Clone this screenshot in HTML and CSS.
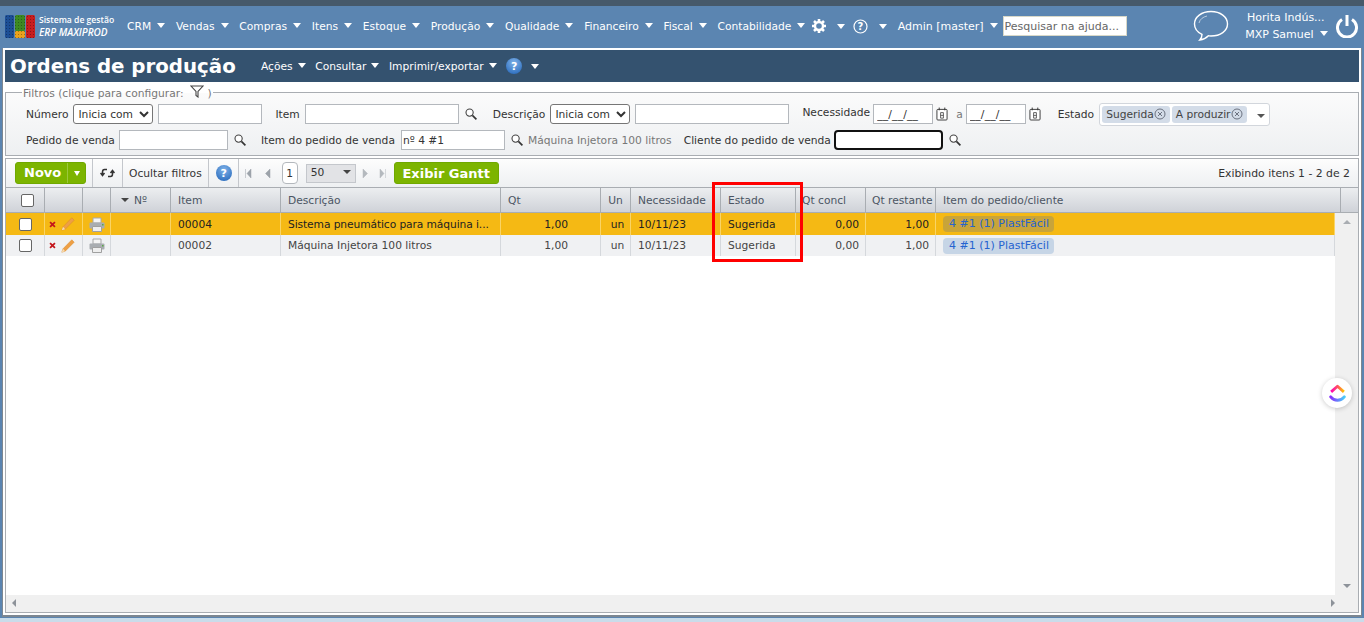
FILE: index.html
```html
<!DOCTYPE html>
<html lang="pt-BR">
<head>
    <meta charset="UTF-8">
    <title>Ordens de produção</title>
    <link rel="stylesheet" href="styles.css">
</head>
<body>
    <svg class="defs" width="0" height="0">
        <symbol id="lupa" viewBox="0 0 12 12">
            <circle cx="4.600" cy="4.600" r="3.600" fill="#fff" stroke="#444" stroke-width="1.100"/>
            <path d="M7.400 7.400l4 4" stroke="#333" stroke-width="1.700"/>
        </symbol>
        <symbol id="calendario" viewBox="0 0 13 15">
            <rect x="1" y="2.500" width="11" height="11.500" rx="1" fill="#fff" stroke="#333"/>
            <path d="M3.500 .5v3M9.500 .5v3" stroke="#333"/>
            <path d="M5 6h3v6H5zM5 9h3" fill="none" stroke="#444" stroke-width=".9"/>
        </symbol>
        <symbol id="impressora" viewBox="0 0 16 15">
            <path d="M4 6V1h8v5z" fill="#f4f4f4" stroke="#a8a8a8"/>
            <rect x=".5" y="5.500" width="15" height="6" rx="1" fill="#a9adb1"/>
            <path d="M3.500 9.500h9v5h-9z" fill="#eee" stroke="#a0a0a0"/>
            <path d="M13 7h1.500v1.500H13z" fill="#5aa845"/>
        </symbol>
        <symbol id="lapis" viewBox="0 0 14 14">
            <path d="M.8 13.200l1.200-3.400L10.800.8l2.400 2.400-9 9z" fill="#ee9f45" stroke="#d98a2b" stroke-width=".5"/>
            <path d="M.8 13.200L2 9.800l2.200 2.400z" fill="#f6dcb4"/>
        </symbol>
        <symbol id="fechar" viewBox="0 0 8 8">
            <path d="M1.200 1.200l5.600 5.600M6.800 1.200L1.200 6.800" stroke="#c4161c" stroke-width="2"/>
        </symbol>
        <symbol id="remover" viewBox="0 0 12 12">
            <circle cx="6" cy="6" r="5" fill="none" stroke="#6b7280"/>
            <path d="M4 4l4 4M8 4l-4 4" stroke="#6b7280"/>
        </symbol>
        <pattern id="pontos" width="3" height="3" patternUnits="userSpaceOnUse">
            <rect x="1" y="1" width="1" height="1" fill="#000" opacity=".3"/>
        </pattern>
    </svg>

    <div class="faixa"></div>

    <header class="topo">
        <svg class="logo" width="30" height="23" viewBox="0 0 30 23">
            <rect x="0" y="0" width="9" height="23" rx="1.500" fill="#1d4f96"/>
            <rect x="10" y="0" width="10" height="16" rx="1.500" fill="#3d8a22"/>
            <rect x="10" y="16" width="10" height="7" rx="1" fill="#eba21d"/>
            <rect x="21" y="0" width="9" height="23" rx="1.500" fill="#c81e1e"/>
            <rect x="0" y="0" width="30" height="23" fill="url(#pontos)"/>
        </svg>
        <div class="marca">
            <span>Sistema de gestão</span>
            <strong>ERP MAXIPROD</strong>
        </div>
        <nav class="menu">
            <a>CRM<i class="seta"></i></a>
            <a>Vendas<i class="seta"></i></a>
            <a>Compras<i class="seta"></i></a>
            <a>Itens<i class="seta"></i></a>
            <a>Estoque<i class="seta"></i></a>
            <a>Produção<i class="seta"></i></a>
            <a>Qualidade<i class="seta"></i></a>
            <a>Financeiro<i class="seta"></i></a>
            <a>Fiscal<i class="seta"></i></a>
            <a>Contabilidade<i class="seta"></i></a>
        </nav>
        <svg class="engrenagem" width="16" height="16" viewBox="0 0 16 16">
            <path d="M8 1v3M8 12v3M1 8h3M12 8h3M3 3l2.200 2.200M10.800 10.800L13 13M13 3l-2.200 2.200M5.200 10.800L3 13" stroke="#fff" stroke-width="2.600"/>
            <circle cx="8" cy="8" r="4" fill="none" stroke="#fff" stroke-width="2.400"/>
        </svg>
        <i class="seta seta-eng"></i>
        <svg class="ajuda-topo" width="15" height="15" viewBox="0 0 15 15">
            <circle cx="7.500" cy="7.500" r="6.500" fill="none" stroke="#fff" stroke-width="1.200"/>
            <text x="7.500" y="11" text-anchor="middle" class="ajuda-txt">?</text>
        </svg>
        <i class="seta seta-aj"></i>
        <a class="admin">Admin [master]<i class="seta"></i></a>
        <input class="pesquisa" placeholder="Pesquisar na ajuda...">
        <svg class="chat" width="36" height="32" viewBox="0 0 36 32">
            <path d="M18 1.500C8.600 1.500 1.500 7 1.500 14c0 4.700 3 8.300 7.500 10.400 0 2-.8 4-2.200 5.600 3.500-.4 6.500-2 8.600-4.200 1 .1 1.800.2 2.600.2 9.400 0 16.500-5 16.500-12S27.400 1.500 18 1.500z" fill="none" stroke="#fff" stroke-width="1.400"/>
            <path d="M6 13c1-4 4-6 8-7" fill="none" stroke="#fff" stroke-width=".8" opacity=".7"/>
        </svg>
        <div class="usuario">
            <span>Horita Indús...</span>
            <span class="usuario-nome">MXP Samuel<i class="seta"></i></span>
        </div>
        <svg class="desligar" width="22" height="24" viewBox="0 0 22 24">
            <path d="M6 5.500a9.500 9.500 0 1 0 10 0" fill="none" stroke="#fff" stroke-width="3"/>
            <path d="M11 1v11" stroke="#fff" stroke-width="3"/>
        </svg>
    </header>

    <main class="painel">
        <div class="titulo">
            <h1>Ordens de produção</h1>
            <a>Ações<i class="seta"></i></a>
            <a>Consultar<i class="seta"></i></a>
            <a>Imprimir/exportar<i class="seta"></i></a>
            <span class="ajuda">?</span>
            <i class="seta seta-tit"></i>
        </div>

        <fieldset class="filtros">
            <legend>Filtros (clique para configurar:
                <svg width="14" height="13" viewBox="0 0 14 13"><path d="M1 1h12L8 6.500V12L6 10.500V6.500z" fill="#fff" stroke="#444" stroke-width="1.100"/></svg>
                )</legend>
            <div class="linha">
                <label class="r-numero">Número</label>
                <select class="sel"><option>Inicia com</option></select>
                <input class="campo c-num">
                <label class="r-item">Item</label>
                <input class="campo c-item">
                <svg class="lupa"><use href="#lupa"/></svg>
                <label class="r-desc">Descrição</label>
                <select class="sel"><option>Inicia com</option></select>
                <input class="campo c-item">
                <label class="r-nec">Necessidade</label>
                <input class="campo c-data" value="__/__/__">
                <svg class="cal"><use href="#calendario"/></svg>
                <span class="ate">a</span>
                <input class="campo c-data" value="__/__/__">
                <svg class="cal"><use href="#calendario"/></svg>
                <label class="r-estado">Estado</label>
                <div class="multi">
                    <span class="chip">Sugerida<svg><use href="#remover"/></svg></span>
                    <span class="chip">A produzir<svg><use href="#remover"/></svg></span>
                    <i class="seta-multi"></i>
                </div>
            </div>
            <div class="linha linha-2">
                <label class="r-numero">Pedido de venda</label>
                <input class="campo c-ped">
                <svg class="lupa"><use href="#lupa"/></svg>
                <label class="r-ipv">Item do pedido de venda</label>
                <input class="campo c-ipv" value="nº 4 #1">
                <svg class="lupa"><use href="#lupa"/></svg>
                <span class="ref">Máquina Injetora 100 litros</span>
                <label class="r-cli">Cliente do pedido de venda</label>
                <input class="campo c-cli">
                <svg class="lupa"><use href="#lupa"/></svg>
            </div>
        </fieldset>

        <section class="grade">
            <div class="barra">
                <button class="verde novo"><span>Novo</span><i class="seta seta-novo"></i></button>
                <span class="sep sep-1"></span>
                <svg class="atualizar" width="15" height="12" viewBox="0 0 15 12">
                    <path d="M7 2.500H4.500C3 2.500 2.500 3.500 2.500 5v3M.5 6l2 2.500L4.500 6M8 9.500h2.500c1.500 0 2-1 2-2.500V4M10.500 6l2-2.500 2 2.500" fill="none" stroke="#333" stroke-width="1.500"/>
                </svg>
                <span class="sep"></span>
                <span class="ocultar">Ocultar filtros</span>
                <span class="sep"></span>
                <span class="ajuda ajuda-barra">?</span>
                <span class="sep"></span>
                <svg class="pag pag-1" width="26" height="9" viewBox="0 0 26 9">
                    <path d="M.5 0v9M6 0L2 4.500 6 9zM25 0l-4.500 4.500L25 9z" fill="#9ca3aa" stroke="#9ca3aa" stroke-width=".5"/>
                </svg>
                <span class="pagina">1</span>
                <div class="por-pagina">50<i class="seta-escura"></i></div>
                <svg class="pag pag-2" width="24" height="9" viewBox="0 0 24 9">
                    <path d="M1 0l4.500 4.500L1 9zM18 0l4 4.500L18 9zM23.500 0v9" fill="#b4b9be" stroke="#b4b9be" stroke-width=".5"/>
                </svg>
                <button class="verde gantt">Exibir Gantt</button>
                <span class="exibindo">Exibindo itens 1 - 2 de 2</span>
            </div>

            <div class="cabecalho">
                <div class="cel cel-check"><input type="checkbox" class="chk"></div>
                <div class="cel"></div>
                <div class="cel"></div>
                <div class="cel cel-num"><i class="seta-escura"></i>Nº</div>
                <div class="cel">Item</div>
                <div class="cel">Descrição</div>
                <div class="cel">Qt</div>
                <div class="cel cel-un">Un</div>
                <div class="cel">Necessidade</div>
                <div class="cel">Estado</div>
                <div class="cel cel-aperto">Qt concl</div>
                <div class="cel cel-aperto">Qt restante</div>
                <div class="cel">Item do pedido/cliente</div>
                <div class="cel cel-fim"></div>
            </div>

            <div class="corpo">
                <div class="linhas">
                    <div class="reg reg-ativo">
                        <div class="cel cel-check"><input type="checkbox" class="chk"></div>
                        <div class="cel cel-acoes"><svg class="x"><use href="#fechar"/></svg><svg class="lapis"><use href="#lapis"/></svg></div>
                        <div class="cel cel-imp"><svg class="imp"><use href="#impressora"/></svg></div>
                        <div class="cel"></div>
                        <div class="cel">00004</div>
                        <div class="cel cel-corte">Sistema pneumático para máquina i...</div>
                        <div class="cel dir cel-qt">1,00</div>
                        <div class="cel cel-un">un</div>
                        <div class="cel">10/11/23</div>
                        <div class="cel">Sugerida</div>
                        <div class="cel dir">0,00</div>
                        <div class="cel dir">1,00</div>
                        <div class="cel cel-link"><a class="pedido">4 #1 (1) PlastFácil</a></div>
                    </div>
                    <div class="reg">
                        <div class="cel cel-check"><input type="checkbox" class="chk"></div>
                        <div class="cel cel-acoes"><svg class="x"><use href="#fechar"/></svg><svg class="lapis"><use href="#lapis"/></svg></div>
                        <div class="cel cel-imp"><svg class="imp"><use href="#impressora"/></svg></div>
                        <div class="cel"></div>
                        <div class="cel">00002</div>
                        <div class="cel">Máquina Injetora 100 litros</div>
                        <div class="cel dir cel-qt">1,00</div>
                        <div class="cel cel-un">un</div>
                        <div class="cel">10/11/23</div>
                        <div class="cel">Sugerida</div>
                        <div class="cel dir">0,00</div>
                        <div class="cel dir">1,00</div>
                        <div class="cel cel-link"><a class="pedido">4 #1 (1) PlastFácil</a></div>
                    </div>
                </div>
                <div class="rolagem-v">
                    <i class="tri-cima"></i>
                    <i class="tri-baixo"></i>
                </div>
            </div>
            <div class="rolagem-h">
                <i class="tri-esq"></i>
                <i class="tri-dir"></i>
            </div>
        </section>

        <div class="destaque"></div>
    </main>

    <div class="clickup">
        <svg width="20" height="22" viewBox="0 0 20 22">
            <defs>
                <linearGradient id="cu1" x1="0" x2="1"><stop offset="0" stop-color="#ff02b8"/><stop offset=".55" stop-color="#ff5a5a"/><stop offset="1" stop-color="#ffc800"/></linearGradient>
                <linearGradient id="cu2" x1="0" x2="1"><stop offset="0" stop-color="#8930fd"/><stop offset="1" stop-color="#49ccf9"/></linearGradient>
            </defs>
            <path d="M2.500 9L10 2.500 17.500 9" fill="none" stroke="url(#cu1)" stroke-width="3.400" stroke-linejoin="round"/>
            <path d="M2 15c2 2.500 4.800 4 8 4s6-1.500 8-4" fill="none" stroke="url(#cu2)" stroke-width="3.400" stroke-linecap="round"/>
        </svg>
    </div>
</body>
</html>
```

FILE: styles.css
```css
* {
    box-sizing: border-box;
}
html, body {
    height: 622px;
    overflow: hidden;
}
body {
    margin: 0;
    background-color: #5b85b1;
    background-image: linear-gradient(to top, #c9dcea 4px, transparent 4px);
    font-family: "DejaVu Sans", Verdana, sans-serif;
    font-size: 10.700px;
    color: #333;
    position: relative;
}
.defs {
    position: absolute;
}
input, select, button {
    font-family: inherit;
    font-size: 10.700px;
}
.faixa {
    height: 6px;
    background-color: #46596a;
}

/* topo */
.topo {
    display: flex;
    align-items: center;
    height: 42px;
    padding-left: 5px;
    padding-bottom: 2px;
    color: #fff;
}
.logo {
    flex: none;
}
.marca {
    display: flex;
    flex-direction: column;
    width: 88px;
    margin-left: 4px;
    font-family: "Open Sans", sans-serif;
    line-height: 12px;
}
.marca span {
    font-size: 8.600px;
    font-weight: 600;
}
.marca strong {
    font-size: 10px;
    font-style: italic;
    font-weight: 600;
}
.menu {
    display: flex;
}
.menu a {
    margin-right: 10.750px;
    white-space: nowrap;
}
.seta {
    display: inline-block;
    margin-left: 6px;
    border-left: 4.500px solid transparent;
    border-right: 4.500px solid transparent;
    border-top: 5px solid #fff;
    vertical-align: 2px;
}
.engrenagem {
    margin-left: -5.500px;
    flex: none;
}
.seta-eng {
    margin-left: 10px;
}
.ajuda-topo {
    margin-left: 8px;
    flex: none;
}
.ajuda-txt {
    fill: #fff;
    font-size: 10px;
    font-weight: bold;
}
.seta-aj {
    margin-left: 11px;
}
.admin {
    margin-left: 11px;
    font-size: 11px;
    white-space: nowrap;
}
.pesquisa {
    width: 124px;
    height: 20px;
    margin-left: 5px;
    padding: 0 1px;
    border: 1px solid #d8d8c8;
    font-size: 11px;
}
.pesquisa::placeholder {
    color: #666;
}
.chat {
    margin-left: 66px;
    flex: none;
}
.usuario {
    display: flex;
    flex-direction: column;
    align-items: flex-end;
    width: 84px;
    margin-left: 15px;
    line-height: 17px;
    font-size: 11px;
    text-align: right;
}
.usuario span:first-child {
    margin-right: 3px;
}
.usuario-nome .seta {
    margin-left: 6px;
}
.desligar {
    margin-left: 8px;
    flex: none;
}

/* painel */
.painel {
    position: relative;
    height: 569px;
    margin: 0 2px;
    padding: 2px;
    background-color: #fff;
    border: 1px solid #7d8791;
    border-top: 0;
    border-bottom-width: 2px;
}
.destaque {
    position: absolute;
    left: 709px;
    top: 134px;
    width: 91px;
    height: 80px;
    border: 3px solid #f00;
}
.titulo {
    display: flex;
    align-items: center;
    height: 32px;
    padding-left: 5px;
    background-color: #34526f;
    color: #fff;
}
.titulo h1 {
    width: 251px;
    margin: 0;
    font-size: 19.800px;
    font-weight: bold;
}
.titulo a {
    margin-right: 9.500px;
    white-space: nowrap;
}
.titulo .seta {
    margin-left: 5px;
}
.ajuda {
    display: inline-flex;
    align-items: center;
    justify-content: center;
    width: 16px;
    height: 16px;
    border-radius: 50%;
    background: radial-gradient(circle at 50% 30%, #7fb2e8, #1e62b8);
    color: #fff;
    font-weight: bold;
    font-size: 11px;
}
.titulo .seta-tit {
    margin-left: 9px;
}

/* filtros */
.filtros {
    height: 71px;
    margin: 3px 0 0;
    padding: 0 0 0 20px;
    border: 1px solid #a9adb2;
    background: linear-gradient(#fbfbfb, #eef0f2);
}
.filtros legend {
    margin-left: -4px;
    padding: 0 1px;
    color: #777;
    line-height: 12px;
}
.filtros legend svg {
    vertical-align: -1px;
    margin: 0 0 0 3px;
}
.linha {
    display: flex;
    align-items: center;
    height: 24px;
    margin-top: 2px;
    white-space: nowrap;
}
.sel {
    width: 80px;
    height: 20px;
    margin-left: 5px;
    padding: 0;
    border: 1px solid #767676;
    border-radius: 3px;
    background-color: #fff;
    color: #333;
}
.campo {
    height: 20px;
    margin-left: 5px;
    padding: 0 1px;
    border: 1px solid #b4b8bd;
    background-color: #fff;
    color: #333;
}
.c-num {
    width: 104px;
}
.c-item {
    width: 154px;
}
.c-data {
    width: 60px;
    padding-left: 3px;
    letter-spacing: .2px;
}
.c-ped {
    width: 109px;
    margin-left: 4px;
}
.c-ipv {
    width: 104px;
    margin-left: 6px;
}
.c-cli {
    width: 109px;
    margin-left: 3px;
    border: 2px solid #111;
    border-radius: 4px;
}
.lupa {
    width: 12px;
    height: 12px;
    margin-left: 6px;
    flex: none;
}
.cal {
    width: 12px;
    height: 14px;
    margin-left: 3px;
    flex: none;
}
.r-item {
    margin-left: 13px;
}
.r-desc {
    margin-left: 16px;
}
.r-nec {
    margin: -4px -2px 0 13px;
}
.ate {
    margin: 0 3px 0 8px;
    color: #777;
}
.ate + .campo {
    margin-left: 0;
}
.r-estado {
    margin-left: 17px;
}
.r-ipv {
    margin-left: 15px;
}
.ref {
    margin-left: 5px;
    color: #777;
}
.r-cli {
    margin-left: 12px;
}
.multi {
    display: flex;
    align-items: center;
    position: relative;
    width: 171px;
    height: 23px;
    margin-left: 5px;
    padding-left: 2px;
    border: 1px solid #d2d6dc;
    border-radius: 3px;
    background-color: #fff;
}
.chip {
    display: inline-flex;
    align-items: center;
    height: 17px;
    margin-right: 2px;
    padding: 0 4px;
    border-radius: 3px;
    background-color: #d3dce8;
    color: #444;
}
.chip svg {
    width: 12px;
    height: 12px;
}
.seta-multi {
    position: absolute;
    right: 4px;
    top: 10px;
    border-left: 4px solid transparent;
    border-right: 4px solid transparent;
    border-top: 4px solid #555;
}

/* grade */
.grade {
    display: flex;
    flex-direction: column;
    height: 455px;
    margin-top: 2px;
    border: 1px solid #a9adb2;
}
.barra {
    display: flex;
    align-items: center;
    height: 29px;
    padding-left: 9px;
    background: linear-gradient(#fdfdfd, #eef0f2);
    border-bottom: 1px solid #a9adb2;
    flex: none;
}
.verde {
    display: inline-flex;
    align-items: center;
    height: 22px;
    padding: 0;
    border: 1px solid #6fa800;
    border-radius: 3px;
    background-color: #7cb400;
    color: #fff;
    font-size: 13px;
    font-weight: bold;
}
.novo {
    width: 71px;
    padding-left: 8px;
}
.novo span {
    width: 44px;
    text-align: left;
    border-right: 1px solid #9bc83d;
    line-height: 20px;
}
.seta-novo {
    margin-left: 6px;
    border-left-width: 3.500px;
    border-right-width: 3.500px;
    border-top-width: 5px;
}
.sep {
    width: 1px;
    height: 28px;
    margin: 0 6px;
    background-color: #c4c7cc;
    flex: none;
}
.atualizar {
    margin: 0 1px;
    flex: none;
}
.ocultar {
    white-space: nowrap;
}
.ajuda-barra {
    margin: 0 0 0 1px;
}
.pag {
    flex: none;
}
.pagina {
    display: inline-flex;
    align-items: center;
    justify-content: center;
    width: 16px;
    height: 22px;
    margin-left: 11px;
    border: 1px solid #b4b8bd;
    border-radius: 4px;
    background-color: #fff;
}
.por-pagina {
    display: flex;
    align-items: center;
    justify-content: space-between;
    width: 50px;
    height: 19px;
    margin-left: 8px;
    padding: 0 4px 2px 4px;
    border: 1px solid #c4c7cc;
    background-color: #e2e3e6;
}
.seta-escura {
    display: inline-block;
    border-left: 4px solid transparent;
    border-right: 4px solid transparent;
    border-top: 4px solid #444;
}
.pag-2 {
    margin-left: 6px;
}
.gantt {
    width: 105px;
    margin-left: 8px;
    justify-content: center;
}
.exibindo {
    margin-left: auto;
    margin-right: 8px;
    font-size: 10.850px;
    white-space: nowrap;
}

.cabecalho, .reg {
    display: grid;
    grid-template-columns: 39px 38px 28px 60px 110px 220px 100px 30px 90px 75px 70px 70px 1fr;
}
.cabecalho {
    grid-template-columns: 39px 38px 28px 60px 110px 220px 100px 30px 90px 75px 70px 70px 405px 1fr;
    height: 25px;
    flex: none;
    background: linear-gradient(#eceef0, #cfd2d8);
    border-bottom: 1px solid #a9adb2;
    color: #4b5563;
}
.cabecalho .cel {
    border-right: 1px solid #a9adb2;
    height: 24px;
}
.cel {
    display: flex;
    align-items: center;
    padding: 0 7px;
    border-right: 1px solid #d5d8dc;
    white-space: nowrap;
    overflow: hidden;
}
.cabecalho .cel-fim {
    border-right: 0;
}
.cel-check {
    padding: 0 0 0 13px;
}
.cabecalho .cel-check {
    padding-left: 15px;
}
.chk {
    width: 13px;
    height: 13px;
    margin: 0;
    appearance: none;
    border: 1px solid #666;
    border-radius: 2px;
    background-color: #fff;
}
.cel-num {
    padding-left: 10px;
    gap: 5px;
}
.cel-un {
    justify-content: center;
    padding: 0;
}
.reg .cel-un {
    padding-left: 4px;
}
.cabecalho .cel-aperto {
    padding: 0 0 0 6px;
}
.corpo {
    display: flex;
    flex: 1;
    min-height: 0;
}
.linhas {
    flex: 1;
}
.reg {
    height: 21px;
    background-color: #f0f1f3;
    color: #444;
}
.reg-ativo {
    height: 22px;
    background-color: #f5b914;
    color: #222;
}
.reg-ativo .cel {
    border-right-color: #f9d466;
}
.dir {
    justify-content: flex-end;
    padding-right: 6px;
}
.cel-qt {
    padding-right: 32px;
}
.cel-corte {
    letter-spacing: -.1px;
}
.cel-acoes {
    padding: 0 0 0 4px;
    gap: 5px;
}
.cel-imp {
    justify-content: center;
    padding: 0;
}
.x {
    width: 7px;
    height: 7px;
}
.lapis {
    width: 14px;
    height: 14px;
}
.imp {
    width: 16px;
    height: 15px;
}
.pedido {
    display: inline-block;
    width: 111px;
    height: 16px;
    padding-left: 6px;
    border-radius: 4px;
    background-color: #c6d5e6;
    color: #2563d0;
    font-size: 11px;
    line-height: 16px;
}
.cel-link {
    padding-left: 7px;
}
.reg-ativo .pedido {
    background-color: #c8a43a;
}
.rolagem-v {
    position: relative;
    width: 23px;
    background-color: #f0f0f0;
}
.tri-cima, .tri-baixo, .tri-esq, .tri-dir {
    position: absolute;
    width: 0;
    height: 0;
}
.tri-cima {
    top: 7px;
    left: 8px;
    border-left: 4px solid transparent;
    border-right: 4px solid transparent;
    border-bottom: 4px solid #a9adb2;
}
.tri-baixo {
    bottom: 7px;
    left: 8px;
    border-left: 4px solid transparent;
    border-right: 4px solid transparent;
    border-top: 4px solid #8d9299;
}
.rolagem-h {
    position: relative;
    height: 17px;
    flex: none;
    background-color: #f0f0f0;
}
.tri-esq {
    top: 4px;
    left: 6px;
    border-top: 4px solid transparent;
    border-bottom: 4px solid transparent;
    border-right: 4px solid #8d9299;
}
.tri-dir {
    top: 4px;
    right: 23px;
    border-top: 4px solid transparent;
    border-bottom: 4px solid transparent;
    border-left: 4px solid #8d9299;
}
.clickup {
    position: absolute;
    left: 1322px;
    top: 378px;
    display: flex;
    align-items: center;
    justify-content: center;
    width: 30px;
    height: 30px;
    border-radius: 50%;
    background-color: #fff;
    box-shadow: 0 1px 5px rgba(0, 0, 0, 0.2);
}
.clickup svg {
    width: 17px;
    height: 19px;
}
```
